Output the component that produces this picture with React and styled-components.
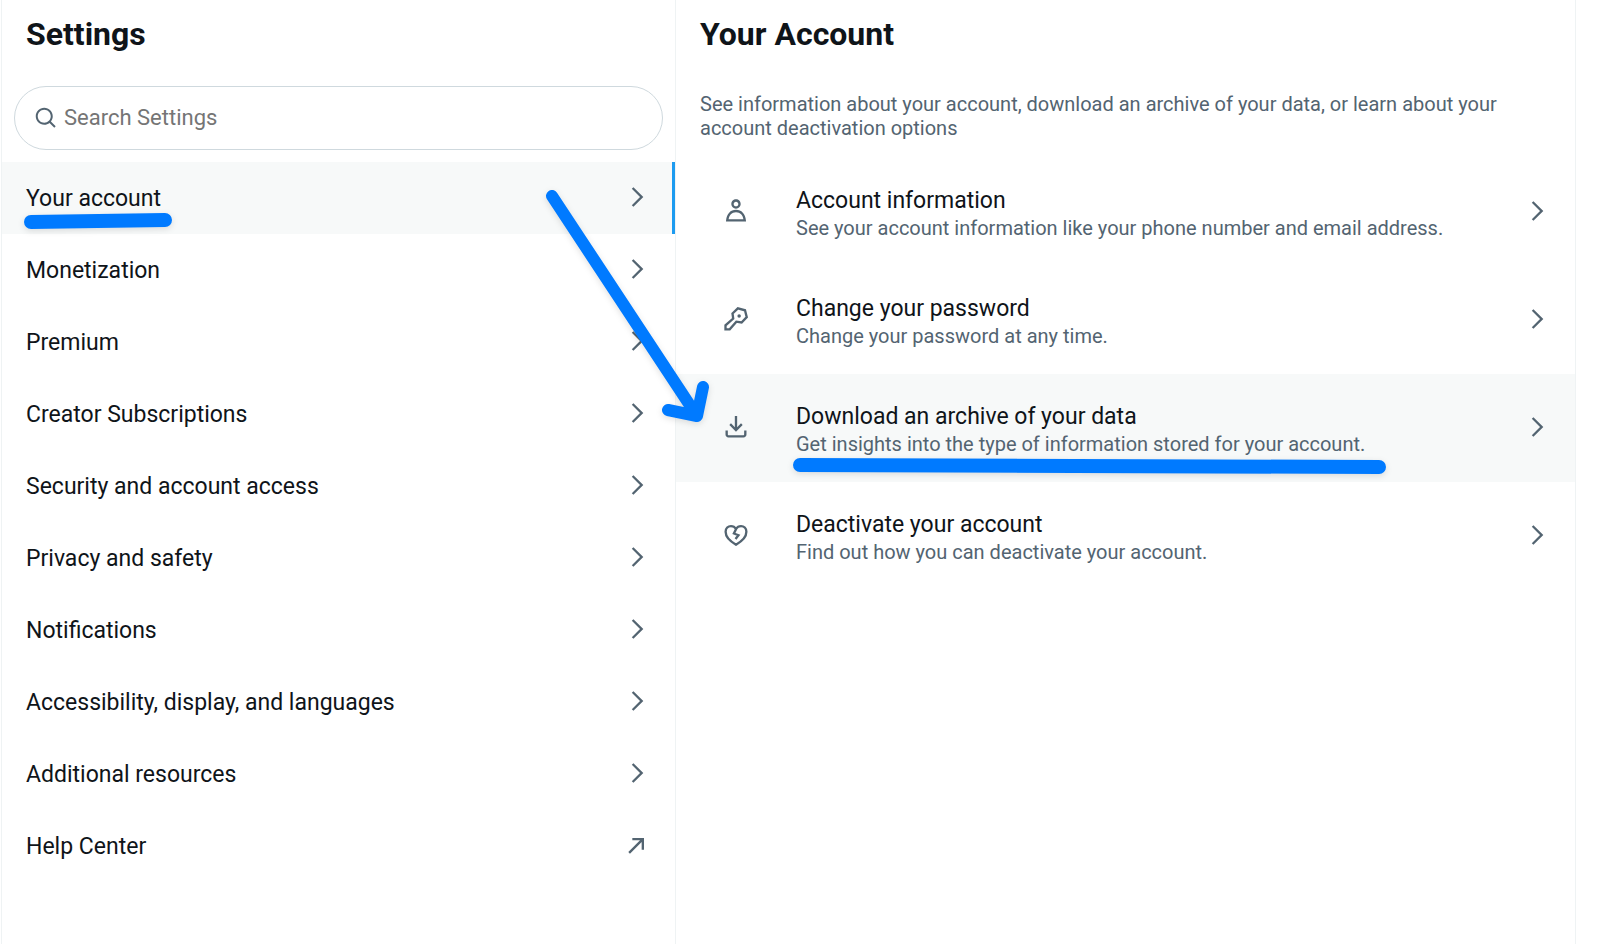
import { useState } from "react";
import styled, { createGlobalStyle } from "styled-components";

const GlobalStyle = createGlobalStyle`
	* {
		box-sizing: border-box;
	}

	body {
		margin: 0;
		background: #ffffff;
		color: #0f1419;
		font-family: Roboto, "Liberation Sans", sans-serif;
	}
`;

const Page = styled.div`
	position: relative;
	display: grid;
	grid-template-columns: 3fr 4fr;
	min-height: 100vh;
	padding: 0 44px 0 1px;
`;

const Sidebar = styled.nav`
	border: solid #eff3f4;
	border-width: 0 1px;
`;

const Detail = styled.main`
	border-right: 1px solid #eff3f4;
`;

const Heading = styled.h2`
	height: 74px;
	margin: 0;
	padding: 16px 24px;
	font-size: 32px;
	font-weight: 700;
	line-height: 36px;
`;

const SearchBox = styled.label`
	display: flex;
	align-items: center;
	gap: 6px;
	height: 64px;
	margin: 12px;
	padding: 0 19px;
	border: 1px solid #cfd9de;
	border-radius: 32px;
	color: #536471;
`;

const SearchInput = styled.input`
	flex: 1;
	min-width: 0;
	padding: 0 0 2px;
	border: none;
	outline: none;
	background: transparent;
	color: #0f1419;
	font: inherit;
	font-size: 22px;

	&::placeholder {
		color: #757575;
		opacity: 1;
	}
`;

const Description = styled.p`
	margin: 0;
	padding: 18px 24px;
	color: #536471;
	font-size: 20px;
	line-height: 24px;
`;

const List = styled.ul`
	margin: 0;
	padding: 0;
	list-style: none;
`;

const RowLink = styled.a`
	display: flex;
	align-items: center;
	background: ${({ $active }) => ($active ? "#f7f9f9" : "transparent")};
	color: #0f1419;
	text-decoration: none;

	svg {
		margin-bottom: 2px;
	}
`;

const NavLink = styled(RowLink)`
	justify-content: space-between;
	height: 72px;
	padding: 0 24px;
	box-shadow: ${({ $active }) => ($active ? "inset -3px 0 #1d9bf0" : "none")};
`;

const NavLabel = styled.span`
	padding-top: 2px;
	font-size: 23px;
	line-height: 32px;
`;

const OptionLink = styled(RowLink)`
	gap: 24px;
	padding: 27px 24px;
`;

const IconSlot = styled.span`
	display: flex;
	justify-content: center;
	width: 72px;
`;

const OptionText = styled.span`
	display: flex;
	flex: 1;
	flex-direction: column;
`;

const OptionTitle = styled.span`
	font-size: 23px;
	line-height: 32px;
`;

const OptionHint = styled.span`
	color: #536471;
	font-size: 20px;
	line-height: 22px;
`;

const Svg = styled.svg`
	flex: none;
	width: ${({ $size }) => $size}px;
	height: ${({ $size }) => $size}px;
	fill: #536471;
`;

// Hand-drawn marks floating above the page
const Marks = styled.svg`
	position: absolute;
	top: 0;
	left: 0;
	width: 1620px;
	height: 600px;
	max-width: 100%;
	pointer-events: none;
	fill: none;
	stroke: #007aff;
	stroke-linecap: round;
	stroke-linejoin: round;
	filter: drop-shadow(0 2px 3px rgba(0, 0, 0, 0.12));
`;

const icons = {
	chevron:
		"M14.586 12L7.543 4.96l1.414-1.42L17.414 12l-8.457 8.46-1.414-1.42L14.586 12z",
	external:
		"M8 6h10v10h-2V9.41L5.957 19.46l-1.414-1.42L14.586 8H8V6z",
	search:
		"M10.25 3.75c-3.59 0-6.5 2.91-6.5 6.5s2.91 6.5 6.5 6.5c1.795 0 3.419-.726 4.596-1.904 1.178-1.177 1.904-2.801 1.904-4.596 0-3.59-2.91-6.5-6.5-6.5zm-8.5 6.5c0-4.694 3.806-8.5 8.5-8.5s8.5 3.806 8.5 8.5c0 1.986-.682 3.815-1.824 5.262l4.781 4.781-1.414 1.414-4.781-4.781c-1.447 1.142-3.276 1.824-5.262 1.824-4.694 0-8.5-3.806-8.5-8.5z",
	account:
		"M5.651 19h12.698c-.337-1.8-1.023-3.21-1.945-4.19C15.318 13.65 13.838 13 12 13s-3.317.65-4.404 1.81c-.922.98-1.608 2.39-1.945 4.19zm.486-5.56C7.627 11.85 9.648 11 12 11s4.373.85 5.863 2.44c1.477 1.58 2.366 3.8 2.632 6.46l.11 1.1H3.395l.11-1.1c.266-2.66 1.155-4.88 2.632-6.46zM12 4c-1.105 0-2 .9-2 2s.895 2 2 2 2-.9 2-2-.895-2-2-2zM8 6c0-2.21 1.791-4 4-4s4 1.79 4 4-1.791 4-4 4-4-1.79-4-4z",
	download:
		"M11.99 16l-5.7-5.7L7.7 8.88l3.29 3.3V2.59h2v9.59l3.3-3.3 1.41 1.42-5.71 5.7zM21 15l-.02 3.51c0 1.38-1.12 2.49-2.5 2.49H5.5C4.11 21 3 19.88 3 18.5V15h2v3.5c0 .28.22.5.5.5h12.98c.28 0 .5-.22.5-.5L19 15h2z",
};

function Icon({ name, size = 28 }) {
	if (name === "key") {
		return (
			<Svg $size={size} viewBox="0 0 24 24" aria-hidden="true">
				<path
					d="M9 7.3L13.6 2.9L19.7 4.5L21.2 10.4L16.8 15L12.3 14.3L6.6 20.9H3V17.4L9.6 11.6Z"
					fill="none"
					stroke="#536471"
					strokeWidth="2"
				/>
				<circle cx="14.7" cy="9.5" r="1.5" />
			</Svg>
		);
	}

	if (name === "heart") {
		return (
			<Svg $size={size} viewBox="0 0 24 24" aria-hidden="true">
				<path
					d="M12 20.3C6.1 17 3.1 13.3 3.1 9.3C3.1 6.3 5.2 4.4 7.7 4.4C9.5 4.4 11 5.2 12 6.8C13 5.2 14.5 4.4 16.3 4.4C18.8 4.4 20.9 6.3 20.9 9.3C20.9 13.3 17.9 17 12 20.3Z M12.2 6.6L10.2 10.7L14.1 12.2L11.6 15.4"
					fill="none"
					stroke="#536471"
					strokeWidth="2"
				/>
			</Svg>
		);
	}

	return (
		<Svg $size={size} viewBox="0 0 24 24" aria-hidden="true">
			<path d={icons[name]} />
		</Svg>
	);
}

const sections = [
	"Your account",
	"Monetization",
	"Premium",
	"Creator Subscriptions",
	"Security and account access",
	"Privacy and safety",
	"Notifications",
	"Accessibility, display, and languages",
	"Additional resources",
	"Help Center",
];

const options = [
	{
		icon: "account",
		title: "Account information",
		hint: "See your account information like your phone number and email address.",
	},
	{
		icon: "key",
		title: "Change your password",
		hint: "Change your password at any time.",
	},
	{
		icon: "download",
		title: "Download an archive of your data",
		hint: "Get insights into the type of information stored for your account.",
	},
	{
		icon: "heart",
		title: "Deactivate your account",
		hint: "Find out how you can deactivate your account.",
	},
];

export default function App() {
	const [search, setSearch] = useState("");
	const [section, setSection] = useState("Your account");

	return (
		<>
			<GlobalStyle />
			<Page>
				<Sidebar>
					<Heading>Settings</Heading>
					<SearchBox>
						<Icon name="search" size={24} />
						<SearchInput
							type="text"
							aria-label="Search Settings"
							placeholder="Search Settings"
							value={search}
							onChange={(event) => setSearch(event.target.value)}
						/>
					</SearchBox>
					<List>
						{sections.map((name) => (
							<li key={name}>
								<NavLink
									href="#"
									$active={name === section}
									onClick={() => setSection(name)}
								>
									<NavLabel>{name}</NavLabel>
									<Icon name={name === "Help Center" ? "external" : "chevron"} />
								</NavLink>
							</li>
						))}
					</List>
				</Sidebar>
				<Detail>
					<Heading>Your Account</Heading>
					<Description>
						See information about your account, download an archive of your
						data, or learn about your account deactivation options
					</Description>
					<List>
						{options.map(({ icon, title, hint }) => (
							<li key={title}>
								<OptionLink href="#" $active={icon === "download"}>
									<IconSlot>
										<Icon name={icon} />
									</IconSlot>
									<OptionText>
										<OptionTitle>{title}</OptionTitle>
										<OptionHint>{hint}</OptionHint>
									</OptionText>
									<Icon name="chevron" />
								</OptionLink>
							</li>
						))}
					</List>
				</Detail>
				<Marks viewBox="0 0 1620 600" aria-hidden="true">
					<path d="M31 222L165 220" strokeWidth="14" />
					<path d="M800 465L1379 467" strokeWidth="14" />
					<path
						d="M552 196L697 416M703 387L697 416L668 410"
						strokeWidth="12"
					/>
				</Marks>
			</Page>
		</>
	);
}
